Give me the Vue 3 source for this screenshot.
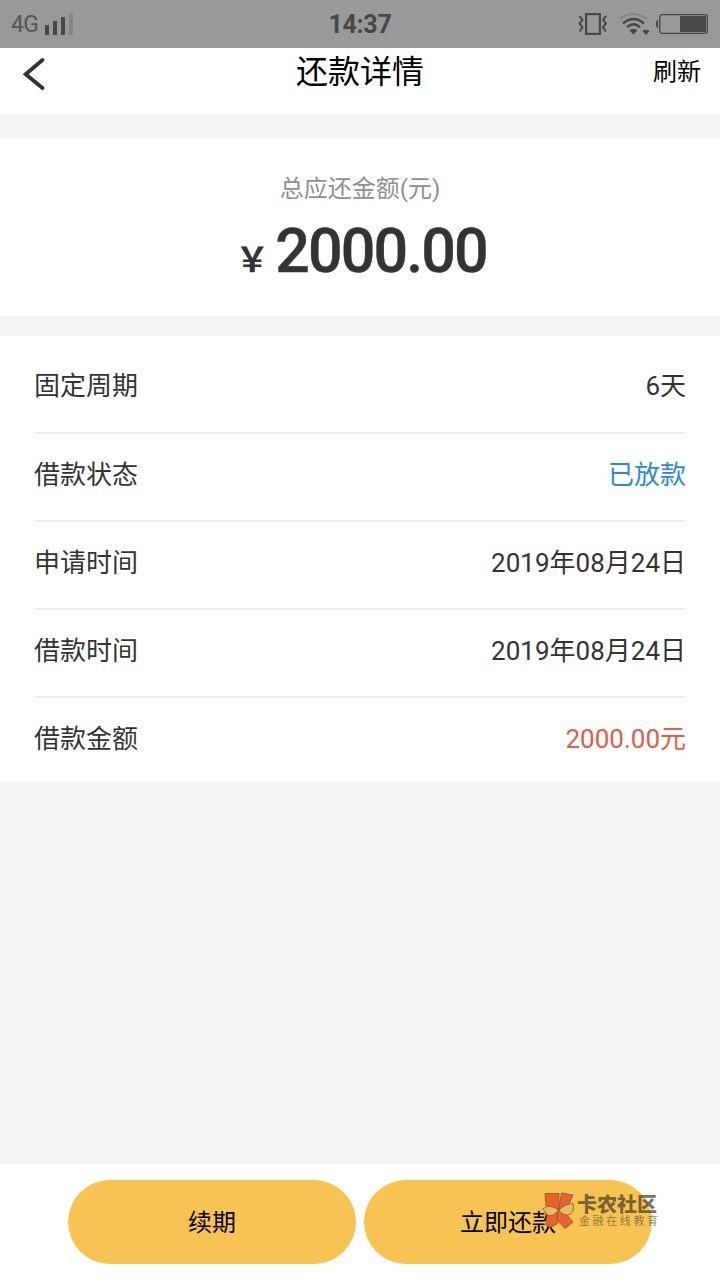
<script setup>
import { computed, ref } from 'vue'

const time = ref('14:37');
const total = ref(2000);
const period = ref(6);
const applyDate = ref('2019年08月24日');
const loanDate = ref('2019年08月24日');

const totalText = computed(() => total.value.toFixed(2));

const rows = computed(() => {
    return [
        { label: '固定周期', value: `${period.value}天` },
        { label: '借款状态', value: '已放款', type: 'status' },
        { label: '申请时间', value: applyDate.value },
        { label: '借款时间', value: loanDate.value },
        { label: '借款金额', value: `${totalText.value}元`, type: 'money' }
    ];
})
</script>

<template>
    <div class="page">
        <div class="status-bar">
            <div class="status-left">
                <span class="network">4G</span>
                <svg class="signal" width="28" height="22" viewBox="0 0 28 22">
                    <path d="M0 12h4v10H0zM8 8h4v14H8zM16 4h4v18h-4z" fill="#474747" />
                    <path d="M24 0h4v22h-4z" fill="#858585" />
                </svg>
            </div>
            <span class="clock">{{ time }}</span>
            <div class="status-right">
                <svg width="30" height="22" viewBox="0 0 30 22" fill="none" stroke="#474747">
                    <rect x="8.1" y="1.1" width="13.8" height="19.8" stroke-width="2.2" />
                    <path d="M1.5 3l3 3.8-3 3.7 3 3.7-3 4.3M28 3l-3 3.8 3 3.7-3 3.7 3 4.3" stroke-width="2" />
                </svg>
                <svg class="wifi" width="31" height="22" viewBox="0 0 31 22" fill="none">
                    <path d="M1 6Q14 -4 28 6" stroke="#858585" stroke-width="2" />
                    <path d="M4 10.5Q14.5 1.5 25 10.5M8 14.2Q14.5 8.5 21 14.2" stroke="#474747" stroke-width="2.4" />
                    <path d="M10.3 17.3Q14.5 14.5 18.6 17.3L14.4 21.5zM24 17h6v1.5L27 22l-3-3.500z" fill="#474747" />
                </svg>
                <svg class="battery" width="52" height="20" viewBox="0 0 52 20">
                    <path d="M2 6v8Q0 14 0 10T2 6z" fill="#474747" />
                    <rect x="3.7" y=".7" width="47.6" height="18.6" rx="2.5" fill="none" stroke="#474747" stroke-width="1.3" />
                    <path d="M24 2h26v16H24z" fill="#474747" />
                </svg>
            </div>
        </div>

        <div class="header">
            <svg class="back" width="22" height="34" viewBox="0 0 22 34">
                <path d="M19.5 3L2.7 17.2L19.5 31" fill="none" stroke="#333" stroke-width="3.8" stroke-linecap="round" />
            </svg>
            <span class="title">还款详情</span>
            <span class="refresh">刷新</span>
        </div>

        <div class="total">
            <div class="total-label">总应还金额(元)</div>
            <div class="total-value"><span class="yen">￥</span><span class="amount">{{ totalText }}</span></div>
        </div>

        <div class="list">
            <div v-for="row in rows" :key="row.label" class="row">
                <span>{{ row.label }}</span>
                <span :class="row.type">{{ row.value }}</span>
            </div>
        </div>

        <div class="footer">
            <button class="btn">续期</button>
            <button class="btn">立即还款</button>
            <div class="watermark">
                <svg width="36" height="38" viewBox="0 0 36 38" stroke="#7c5a31" stroke-width=".8" stroke-linejoin="round">
                    <path d="M4 1.500H18V17.500L5 14z" fill="#e9622f" />
                    <path d="M20.500 1L32 3L26 16L17.800 17.500z" fill="#e9622f" />
                    <path d="M6 22L17.500 18L16 32L9 35.500L5 33z" fill="#e9622f" />
                    <path d="M17 18L24 21L32 30L24 36.500L16 28z" fill="#e9622f" />
                    <path d="M1.500 17Q8 11 17.500 18Q11.500 26.500 5.500 22.500Q4 18.500 1.500 17z" fill="#f0b95b" />
                    <path d="M18 18Q24.500 11.500 32 11.500Q34 21.500 26.500 23Q20 22.500 18 18z" fill="#f0b95b" />
                </svg>
                <div class="watermark-text">
                    <span class="brand">卡农社区</span>
                    <span class="slogan">金融在线教育</span>
                </div>
            </div>
        </div>
    </div>
</template>

<style>
body {
    margin: 0;
}
</style>

<style scoped>
.page {
    display: flex;
    flex-direction: column;
    width: 720px;
    height: 1280px;
    overflow: hidden;
    background-color: #f4f4f4;
    color: #333;
    font-family: Roboto, "Noto Sans CJK SC", sans-serif;
}
.status-bar {
    display: grid;
    grid-template-columns: 1fr auto 1fr;
    align-items: center;
    height: 48px;
    padding: 0 12px 0 11px;
    box-sizing: border-box;
    background-color: #999;
    color: #474747;
}
.status-left,
.status-right {
    display: flex;
    align-items: center;
}
.status-right {
    justify-content: flex-end;
}
.network {
    width: 34px;
    font-size: 23px;
    letter-spacing: -0.8px;
    color: #555;
}
.clock {
    padding: 2px 0 0 1px;
    font-size: 25px;
    font-weight: 700;
    letter-spacing: -0.3px;
    line-height: 46px;
}
.wifi {
    margin-left: 11px;
}
.battery {
    margin-left: 6px;
}
.header {
    display: grid;
    grid-template-columns: 1fr auto 1fr;
    height: 66px;
    padding: 0 19px 0 23px;
    box-sizing: border-box;
    background-color: #fff;
    color: #000;
    line-height: 49px;
}
.back {
    margin-top: 9px;
}
.title {
    padding-right: 4px;
    font-size: 32px;
}
.refresh {
    font-size: 24px;
    text-align: right;
}
.total {
    height: 178px;
    margin: 24px 0 20px;
    padding-top: 35px;
    box-sizing: border-box;
    background-color: #fff;
    text-align: center;
}
.total-label {
    font-size: 24px;
    line-height: 32px;
    color: #8f8f8f;
}
.total-value {
    display: flex;
    justify-content: center;
    align-items: baseline;
    gap: 6px;
    padding-left: 2px;
    line-height: 92px;
}
.yen {
    font-family: "Noto Sans CJK SC", sans-serif;
    font-size: 34px;
    font-weight: 700;
    line-height: 40px;
}
.amount {
    font-size: 61px;
    font-weight: 500;
    letter-spacing: -1.9px;
    -webkit-text-stroke: 0.4px #333;
}
.list {
    padding: 10px 34px 0;
    background-color: #fff;
}
.row {
    display: flex;
    justify-content: space-between;
    height: 88px;
    box-sizing: border-box;
    border-bottom: 2px solid #eee;
    font-size: 26px;
    line-height: 82px;
}
.row:first-child {
    line-height: 80px;
}
.row:last-child {
    height: 84px;
    border-bottom: none;
}
.status {
    color: #2e87d8;
}
.money {
    color: #dc6048;
}
.footer {
    position: relative;
    display: flex;
    justify-content: center;
    gap: 8px;
    height: 116px;
    margin-top: auto;
    padding-top: 16px;
    box-sizing: border-box;
    background-color: #fff;
}
.btn {
    width: 288px;
    height: 84px;
    padding: 2px 0 0;
    border: none;
    border-radius: 42px;
    background-color: #f7c353;
    color: #000;
    font-family: inherit;
    font-size: 24px;
    line-height: 82px;
}
.watermark {
    position: absolute;
    left: 541px;
    top: 28px;
    display: flex;
}
.watermark-text {
    display: flex;
    flex-direction: column;
    color: rgba(80, 65, 45, 0.75);
    white-space: nowrap;
}
.brand {
    font-size: 20px;
    font-weight: 900;
    line-height: 27px;
}
.slogan {
    padding-left: 2px;
    font-size: 11px;
    line-height: 6px;
    letter-spacing: 2.6px;
    color: rgba(80, 65, 45, 0.6);
}
</style>
